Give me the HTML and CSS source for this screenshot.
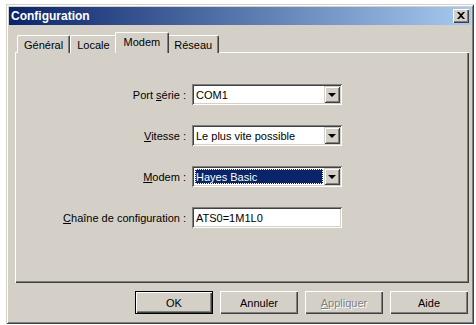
FILE: index.html
```html
<!DOCTYPE html>
<html lang="fr">
<head>
<meta charset="utf-8">
<title>Configuration</title>
<link rel="stylesheet" href="styles.css">
</head>
<body>
<div class="window">
  <div class="titlebar">
    <span class="title">Configuration</span>
    <span class="close"><svg width="8" height="7" viewBox="0 0 8 7"><path d="M0 0h2l2 2 2-2h2L5 3.5 8 7H6L4 5 2 7H0l3-3.5z" fill="#000"/></svg></span>
  </div>
  <div class="body">
    <div class="tabs">
      <div class="tab">Général</div>
      <div class="tab">Locale</div>
      <div class="tab active">Modem</div>
      <div class="tab">Réseau</div>
    </div>
    <div class="panel">
      <div class="form">
        <span class="label">Port <u>s</u>érie :</span>
        <div class="field combo"><span class="value">COM1</span><span class="arrow"><i></i></span></div>
        <span class="label"><u>V</u>itesse :</span>
        <div class="field combo"><span class="value">Le plus vite possible</span><span class="arrow"><i></i></span></div>
        <span class="label"><u>M</u>odem :</span>
        <div class="field combo focused"><span class="value"><span class="sel">Hayes Basic</span></span><span class="arrow"><i></i></span></div>
        <span class="label"><u>C</u>haîne de configuration :</span>
        <div class="field text"><span class="value">ATS0=1M1L0</span></div>
      </div>
    </div>
    <div class="buttons">
      <div class="btn default"><span>OK</span></div>
      <div class="btn"><span>Annuler</span></div>
      <div class="btn disabled"><span><u>A</u>ppliquer</span></div>
      <div class="btn"><span>Aide</span></div>
    </div>
  </div>
</div>
</body>
</html>
```
FILE: styles.css
```css
html, body {
  margin: 0;
  padding: 0;
  background: #ffffff;
}
body {
  font-family: "Liberation Sans", Arial, sans-serif;
  font-size: 11px;
  color: #000;
}
.window {
  margin: 4px 0 0 6px;
  width: 468px;
  height: 320px;
  box-sizing: border-box;
  background: #d4d0c8;
  padding: 3px;
  box-shadow: inset 1px 1px #d4d0c8, inset -1px -1px #404040, inset 2px 2px #ffffff, inset -2px -2px #808080;
  display: flex;
  flex-direction: column;
}
.titlebar {
  height: 18px;
  background: linear-gradient(to right, #0a246a, #a6caf0);
  display: flex;
  align-items: center;
  justify-content: space-between;
  padding: 0 2px 0 2px;
}
.title {
  color: #fff;
  font-weight: bold;
  font-size: 12px;
}
.close {
  width: 16px;
  height: 14px;
  box-sizing: border-box;
  background: #d4d0c8;
  box-shadow: inset 1px 1px #ffffff, inset -1px -1px #404040, inset -2px -2px #808080;
  display: flex;
  align-items: center;
  justify-content: center;
  padding-bottom: 1px;
}
.body {
  flex: 1;
  display: flex;
  flex-direction: column;
  padding: 8px 2px 0 6px;
}
.tabs {
  display: flex;
  align-items: flex-end;
  padding-left: 2px;
  height: 20px;
  margin-bottom: -1px;
}
.tab {
  position: relative;
  height: 18px;
  box-sizing: border-box;
  padding: 3px 6px 0 6px;
  border-top: 1px solid #ffffff;
  border-left: 1px solid #ffffff;
  border-right: 1px solid #404040;
  border-radius: 2px 2px 0 0;
  box-shadow: inset -1px 0 #808080;
  background: #d4d0c8;
}
.tab.active {
  height: 21px;
  margin: 0 -2px;
  padding: 3px 8px 0 8px;
  z-index: 1;
}
.panel {
  height: 231px;
  box-sizing: border-box;
  box-shadow: inset 1px 1px #ffffff, inset -1px -1px #404040, inset -2px -2px #808080;
  padding: 32px 0 0 0;
}
.form {
  display: grid;
  grid-template-columns: 171px 150px;
  column-gap: 6px;
  row-gap: 20px;
  align-items: center;
}
.label {
  text-align: right;
}
.field {
  height: 21px;
  box-sizing: border-box;
  background: #ffffff;
  box-shadow: inset 1px 1px #808080, inset -1px -1px #ffffff, inset 2px 2px #404040, inset -2px -2px #d4d0c8;
  display: flex;
  align-items: stretch;
  padding: 2px;
}
.value {
  flex: 1;
  display: flex;
  align-items: center;
  padding-left: 2px;
}
.focused .value {
  padding: 1px;
}
.sel {
  flex: 1;
  align-self: stretch;
  display: flex;
  align-items: center;
  background: #0a246a;
  color: #fff;
  padding-left: 1px;
  outline: 1px dotted #ffffff;
  outline-offset: -1px;
}
.arrow {
  width: 16px;
  background: #d4d0c8;
  box-shadow: inset 1px 1px #d4d0c8, inset -1px -1px #404040, inset 2px 2px #ffffff, inset -2px -2px #808080;
  display: flex;
  align-items: center;
  justify-content: center;
}
.arrow i {
  width: 0;
  height: 0;
  border-left: 4px solid transparent;
  border-right: 4px solid transparent;
  border-top: 4px solid #000;
  margin-left: -1px;
}
.buttons {
  display: flex;
  justify-content: flex-end;
  gap: 7px;
  margin-top: 8px;
  padding-right: 1px;
}
.btn {
  width: 78px;
  height: 23px;
  box-sizing: border-box;
  background: #d4d0c8;
  box-shadow: inset 1px 1px #ffffff, inset -1px -1px #404040, inset -2px -2px #808080;
  display: flex;
  align-items: center;
  justify-content: center;
}
.btn.default {
  box-shadow: inset 0 0 0 1px #000, inset 2px 2px #ffffff, inset -2px -2px #404040, inset -3px -3px #808080;
}
.btn.disabled span {
  color: #808080;
  text-shadow: 1px 1px #ffffff;
}
u {
  text-decoration: underline;
  text-underline-offset: 1px;
}
```
